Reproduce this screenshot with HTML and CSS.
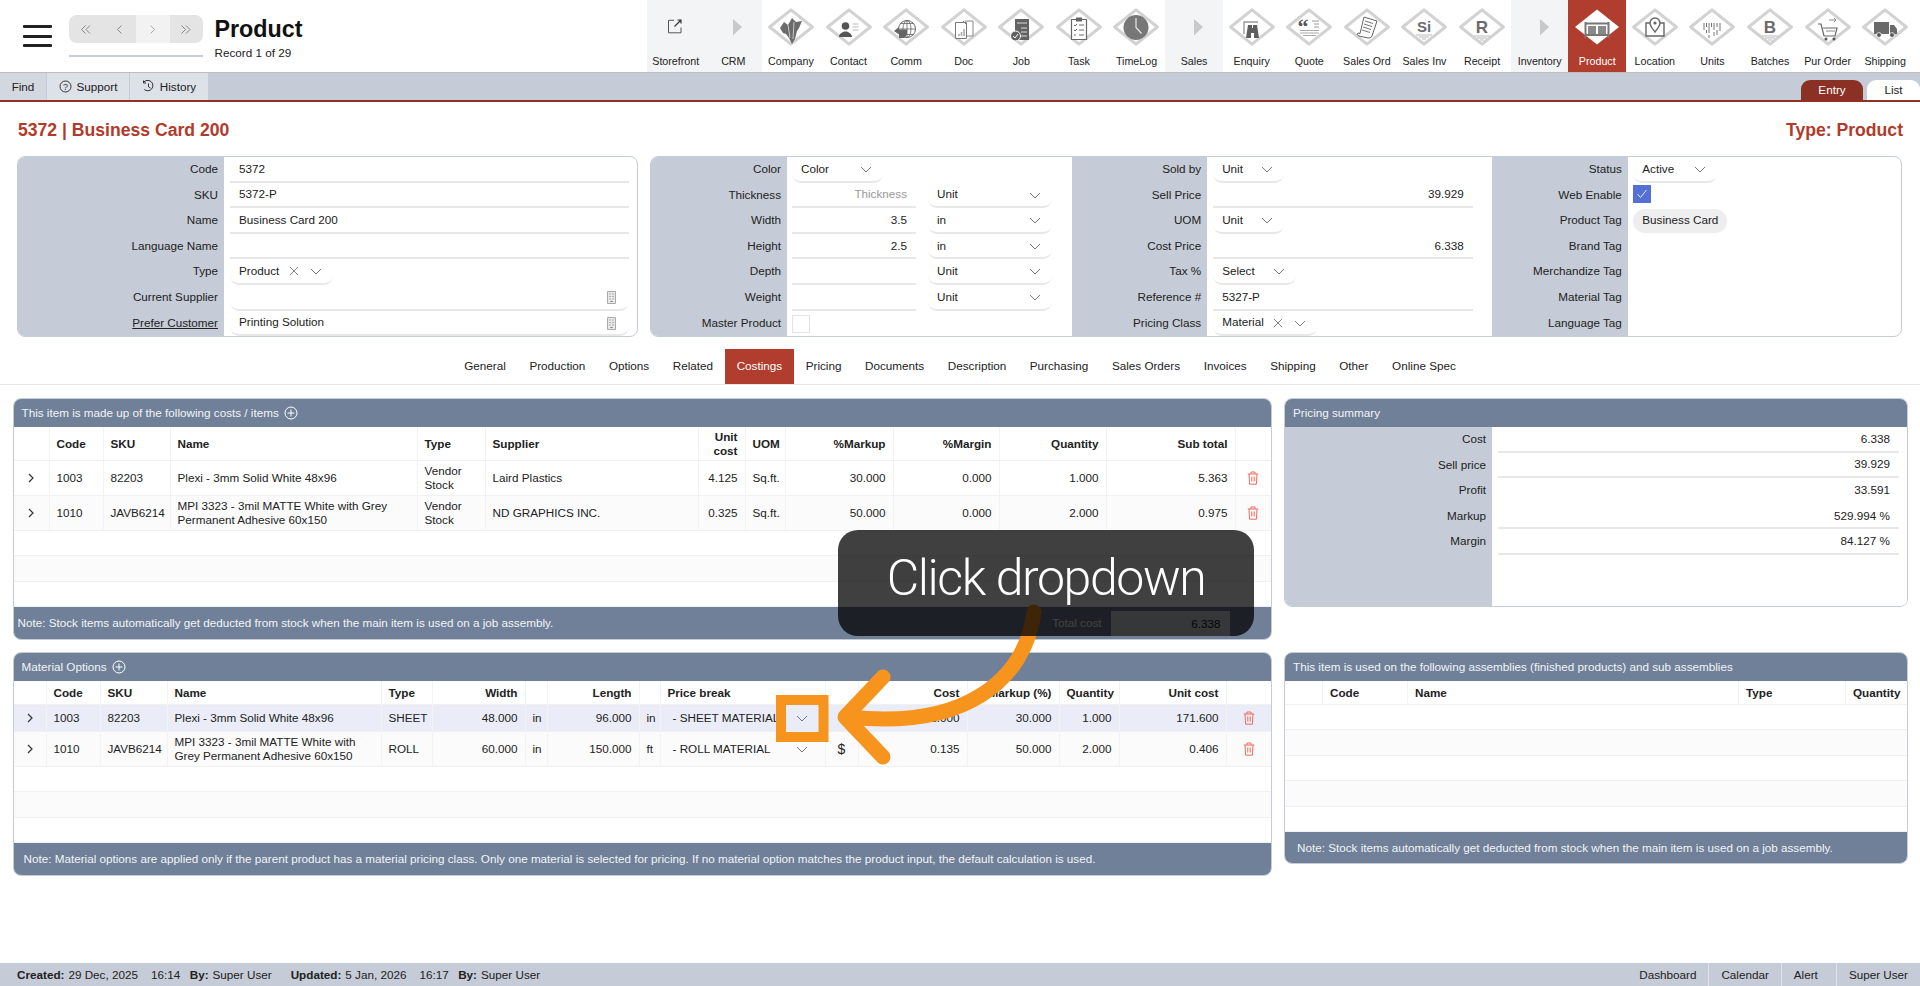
FILE: index.html
```html
<!DOCTYPE html>
<html lang="en">
<head>
<meta charset="utf-8">
<title>Product</title>
<link rel="stylesheet" href="styles.css">
</head>
<body>
<svg class="defs" width="0" height="0" aria-hidden="true">
  <symbol id="dia" viewBox="0 0 46 38"><polygon points="23,1.800 44.400,19 23,36.200 1.600,19" fill="#fff" stroke="#d2d2d2" stroke-width="3" stroke-linejoin="round"/></symbol>
  <symbol id="chev" viewBox="0 0 12 7"><path d="M1 1l5 5 5-5" fill="none" stroke="#777" stroke-width="1"/></symbol>
  <symbol id="clr" viewBox="0 0 11 11"><path d="M1 1l9 9M10 1l-9 9" fill="none" stroke="#777" stroke-width="1"/></symbol>
  <symbol id="trash" viewBox="0 0 12 14"><path d="M.8 3h10.400M4 3V1h4v2M2 3l.6 10.200h6.800L10 3M4.800 5.500v5M7.200 5.500v5" fill="none" stroke="#f26a5a" stroke-width="1"/></symbol>
  <symbol id="expand" viewBox="0 0 6 10"><path d="M1 1l4 4-4 4" fill="none" stroke="#333" stroke-width="1.200"/></symbol>
  <symbol id="plus" viewBox="0 0 14 14"><circle cx="7" cy="7" r="6" fill="none" stroke="#fff" stroke-width="1"/><path d="M7 3.600v6.800M3.600 7h6.800" stroke="#fff" stroke-width="1"/></symbol>
  <symbol id="bldg" viewBox="0 0 9 13"><path d="M.5.5h8v12h-8z" fill="#e8e8e8" stroke="#aaa"/><path d="M2.500 3h1M5.500 3h1M2.500 5.500h1M5.500 5.500h1M2.500 8h1M5.500 8h1M3.500 10.500h2" stroke="#777"/></symbol>
</svg>

<header class="top">
  <button class="burger" aria-label="Menu"><span></span><span></span><span></span></button>
  <div class="pager-wrap">
    <div class="pager">
      <span class="pg"><svg width="10" height="9" viewBox="0 0 10 9"><path d="M4.500.5l-4 4 4 4M9 .5l-4 4 4 4" fill="none" stroke="#888"/></svg></span>
      <span class="pg"><svg width="5" height="9" viewBox="0 0 5 9"><path d="M4.500.5l-4 4 4 4" fill="none" stroke="#888"/></svg></span>
      <span class="pg off"><svg width="5" height="9" viewBox="0 0 5 9"><path d="M.5.5l4 4-4 4" fill="none" stroke="#aaa"/></svg></span>
      <span class="pg"><svg width="10" height="9" viewBox="0 0 10 9"><path d="M.5.5l4 4-4 4M5 .5l4 4-4 4" fill="none" stroke="#888"/></svg></span>
    </div>
    <div class="pager-line"></div>
  </div>
  <div class="rec">
    <h1>Product</h1>
    <p>Record 1 of 29</p>
  </div>
  <nav class="mods">
    <a class="mod grp"><svg class="ic" viewBox="0 0 46 38"><path d="M28 19.500v5.300h-12.500v-12.500h5.500" fill="none" stroke="#555" stroke-width="1"/><path d="M21.500 18.500l6.500-6.500M24.500 12h3.500v3.500" fill="none" stroke="#333" stroke-width="1.200"/></svg><span>Storefront</span></a>
    <a class="mod grp"><svg class="ic" viewBox="0 0 46 38"><path d="M23 11l9 8-9 8.500z" fill="#c9c9c9"/></svg><span>CRM</span></a>
    <a class="mod"><svg class="ic" viewBox="0 0 46 38"><use href="#dia"/><g transform="translate(0 4)"><path d="M12 16l4-6 4 3 4-7 4 4 6-1-3 7-2 3-2 8-3 5-3-6-3-4-3-1z" fill="#6b6b6b"/><path d="M20 13l2 13M26 10l-1 17" stroke="#ddd" stroke-width=".8"/></g></svg><span>Company</span></a>
    <a class="mod"><svg class="ic" viewBox="0 0 46 38"><use href="#dia"/><g transform="translate(0 3)"><circle cx="19.500" cy="15" r="3.800" fill="#555"/><path d="M13 26c0-3.500 3.500-4.500 5-5.500h3c1.500 1 5 2 5 5.500z" fill="#555"/><path d="M26.500 13h6M26.500 16h6M26.500 19h6" stroke="#bbb"/></g></svg><span>Contact</span></a>
    <a class="mod"><svg class="ic" viewBox="0 0 46 38"><use href="#dia"/><g transform="translate(0 4)"><circle cx="24" cy="17" r="8.500" fill="#fff" stroke="#666"/><path d="M15.500 17h17M24 8.500v17M18 11.500h12M18 22.500h12" stroke="#666" stroke-width=".8"/><ellipse cx="24" cy="17" rx="4" ry="8.500" fill="none" stroke="#666" stroke-width=".8"/><path d="M11 19l5-4v2.500h8v5l-3 3.500h-5v-3.500z" fill="#666"/></g></svg><span>Comm</span></a>
    <a class="mod"><svg class="ic" viewBox="0 0 46 38"><use href="#dia"/><g transform="translate(0 2)"><path d="M24 11h8v15h-8" fill="#fff" stroke="#888"/><path d="M14.500 12.500h11v16h-11z" fill="#fff" stroke="#777"/><path d="M22 11l3 3" stroke="#777"/><path d="M18 26v-2M20.500 26v-4M23 26v-7" stroke="#aaa" stroke-width="1.600"/></g></svg><span>Doc</span></a>
    <a class="mod"><svg class="ic" viewBox="0 0 46 38"><use href="#dia"/><g transform="translate(0 3)"><path d="M17 8h14v21h-14z" fill="#626262"/><path d="M19 12h10M23 17h6M23 21h6M23 25h6" stroke="#ddd"/><circle cx="17.500" cy="25" r="5" fill="#626262" stroke="#fff"/><path d="M15 25l2 2 3-4" fill="none" stroke="#fff"/></g></svg><span>Job</span></a>
    <a class="mod"><svg class="ic" viewBox="0 0 46 38"><use href="#dia"/><g transform="translate(0 2)"><path d="M15.500 9.500h15v20h-15z" fill="#fff" stroke="#666" stroke-width="1.200"/><path d="M20 7.500h6v4h-6z" fill="#666"/><path d="M18 15l1 1 2-2M18 20l1 1 2-2M18 25h2M23 15h5M23 20h5M23 25h5" fill="none" stroke="#666"/></g></svg><span>Task</span></a>
    <a class="mod"><svg class="ic" viewBox="0 0 46 38"><use href="#dia"/><circle cx="23" cy="19.500" r="12.500" fill="#777"/><path d="M23 10v9.500l5.500 6" fill="none" stroke="#e8e8e8" stroke-width="1.200"/></svg><span>TimeLog</span></a>
    <a class="mod grp"><svg class="ic" viewBox="0 0 46 38"><path d="M23 11l9 8-9 8.500z" fill="#c9c9c9"/></svg><span>Sales</span></a>
    <a class="mod"><svg class="ic" viewBox="0 0 46 38"><use href="#dia"/><g transform="translate(0 2)"><path d="M29 12h-14v12" fill="none" stroke="#999" stroke-width="1.400"/><path d="M19 15h4v3h1v-3h4l2 13h-5v-5h-3v5h-5z" fill="#5e5e5e"/></g></svg><span>Enquiry</span></a>
    <a class="mod"><svg class="ic" viewBox="0 0 46 38"><use href="#dia"/><g transform="translate(0 1)"><text class="ic-t q" x="11.500" y="25">“</text><path d="M26 12h7M28 15h5M28 18h5" stroke="#999"/><path d="M14 21.500h19M14 24h19M17 26.500h13" stroke="#aaa"/></g></svg><span>Quote</span></a>
    <a class="mod"><svg class="ic" viewBox="0 0 46 38"><use href="#dia"/><g transform="translate(0 1)"><path d="M20 8l13 4-5 15c-1 2-3 2-4 2l-9-2c-2-1-2-2-1-3l2 .500z" fill="#fff" stroke="#666"/><path d="M21 12l8 2.500M20 15l8 2.500M19 18l8 2.500M18 21l8 2.500" stroke="#777"/></g></svg><span>Sales Ord</span></a>
    <a class="mod"><svg class="ic" viewBox="0 0 46 38"><use href="#dia"/><text class="ic-t" x="23" y="24">Si</text><path d="M15 27h16M18 29h10M21 31h4" stroke="#bbb"/></svg><span>Sales Inv</span></a>
    <a class="mod"><svg class="ic" viewBox="0 0 46 38"><use href="#dia"/><text class="ic-t big" x="23" y="25">R</text><path d="M15 28h16M18 30h10M21 32h4" stroke="#bbb"/></svg><span>Receipt</span></a>
    <a class="mod grp"><svg class="ic" viewBox="0 0 46 38"><path d="M23 11l9 8-9 8.500z" fill="#c9c9c9"/></svg><span>Inventory</span></a>
    <a class="mod on"><svg class="ic" viewBox="0 0 46 38"><polygon points="23,1.500 45,19 23,36.500 1,19" fill="#fff"/><g transform="translate(0 3)"><path d="M11.500 11v16M34.500 11v16M11.500 12.500h23M11.500 24h23" stroke="#777" stroke-width="2"/><path d="M14 15h8v8h-8zM24 15h8v8h-8z" fill="#8a8a8a"/></g></svg><span>Product</span></a>
    <a class="mod"><svg class="ic" viewBox="0 0 46 38"><use href="#dia"/><g transform="translate(0 1)"><path d="M18 14h-4v13h18v-13h-4" fill="none" stroke="#666" stroke-width="1.400"/><path d="M23 23c-3-4-5-6-5-9a5 5 0 0 1 10 0c0 3-2 5-5 9z" fill="#fff" stroke="#666" stroke-width="1.400"/><circle cx="23" cy="14" r="1.600" fill="#666"/></g></svg><span>Location</span></a>
    <a class="mod"><svg class="ic" viewBox="0 0 46 38"><use href="#dia"/><g transform="translate(0 3)"><path d="M15 12v7M17.500 12v4M20 12v10M22.500 12v4M25 12v7M28 12v4M31 12v8M20 24v3M25 21v4M17.500 19v3M28 19v5" stroke="#777" stroke-width="1"/></g></svg><span>Units</span></a>
    <a class="mod"><svg class="ic" viewBox="0 0 46 38"><use href="#dia"/><text class="ic-t big" x="23" y="25">B</text><path d="M15 28h16M18 30h10M21 32h4" stroke="#bbb"/></svg><span>Batches</span></a>
    <a class="mod"><svg class="ic" viewBox="0 0 46 38"><use href="#dia"/><g transform="translate(0 3)"><path d="M13 13h3l3 12h11l2-8h-14" fill="none" stroke="#666" stroke-width="1.200"/><path d="M21 20h9M24 9h7M29 7l2 2-2 2" fill="none" stroke="#888"/><circle cx="21" cy="28" r="1.500" fill="#555"/><circle cx="29" cy="28" r="1.500" fill="#555"/></g></svg><span>Pur Order</span></a>
    <a class="mod"><svg class="ic" viewBox="0 0 46 38"><use href="#dia"/><g transform="translate(0 2)"><path d="M12 12h15v12h-15z" fill="#6a6a6a"/><path d="M28 15h4l3 4v5h-7z" fill="#6a6a6a"/><circle cx="17" cy="25" r="2.400" fill="#555" stroke="#fff" stroke-width=".8"/><circle cx="30" cy="25" r="2.400" fill="#555" stroke="#fff" stroke-width=".8"/></g></svg><span>Shipping</span></a>
  </nav>
</header>

<div class="subnav">
  <a class="sub s-find">Find</a>
  <a class="sub s-sup"><svg width="13" height="13" viewBox="0 0 13 13"><circle cx="6.500" cy="6.500" r="5.500" fill="none" stroke="#333"/><text class="qm" x="6.500" y="9.500">?</text></svg>Support</a>
  <a class="sub s-his"><svg width="13" height="13" viewBox="0 0 13 13"><path d="M1.500 2.500a5.200 5.200 0 1 1 .8 7M1.500 .5v2.500h2.500M6.500 3.500v3.200l2 1.300" fill="none" stroke="#333"/></svg>History</a>
  <div class="sub-tabs">
    <a class="st on">Entry</a>
    <a class="st">List</a>
  </div>
</div>

<div class="titlebar">
  <h2>5372 | Business Card 200</h2>
  <h2>Type: Product</h2>
</div>

<section class="forms">
  <div class="card c1">
    <div class="grp-f g1">
      <div class="row"><label>Code</label><div class="val"><div class="inp">5372</div></div></div>
      <div class="row"><label>SKU</label><div class="val"><div class="inp">5372-P</div></div></div>
      <div class="row"><label>Name</label><div class="val"><div class="inp">Business Card 200</div></div></div>
      <div class="row"><label>Language Name</label><div class="val"><div class="inp"></div></div></div>
      <div class="row"><label>Type</label><div class="val"><div class="inp sel w103">Product<svg class="x"><use href="#clr"/></svg><svg class="cv"><use href="#chev"/></svg></div></div></div>
      <div class="row"><label>Current Supplier</label><div class="val"><div class="inp look"><svg class="bl"><use href="#bldg"/></svg></div></div></div>
      <div class="row"><label><u>Prefer Customer</u></label><div class="val"><div class="inp look">Printing Solution<svg class="bl"><use href="#bldg"/></svg></div></div></div>
    </div>
  </div>
  <div class="card c2">
    <div class="grp-f g2">
      <div class="row"><label>Color</label><div class="val"><div class="inp sel w91">Color<svg class="cv"><use href="#chev"/></svg></div></div></div>
      <div class="row"><label>Thickness</label><div class="val"><div class="inp num ph">Thickness</div><div class="inp sel unit">Unit<svg class="cv"><use href="#chev"/></svg></div></div></div>
      <div class="row"><label>Width</label><div class="val"><div class="inp num">3.5</div><div class="inp sel unit">in<svg class="cv"><use href="#chev"/></svg></div></div></div>
      <div class="row"><label>Height</label><div class="val"><div class="inp num">2.5</div><div class="inp sel unit">in<svg class="cv"><use href="#chev"/></svg></div></div></div>
      <div class="row"><label>Depth</label><div class="val"><div class="inp num"></div><div class="inp sel unit">Unit<svg class="cv"><use href="#chev"/></svg></div></div></div>
      <div class="row"><label>Weight</label><div class="val"><div class="inp num"></div><div class="inp sel unit">Unit<svg class="cv"><use href="#chev"/></svg></div></div></div>
      <div class="row"><label>Master Product</label><div class="val"><div class="chk"></div></div></div>
    </div>
    <div class="grp-f g3">
      <div class="row"><label>Sold by</label><div class="val"><div class="inp sel w71">Unit<svg class="cv"><use href="#chev"/></svg></div></div></div>
      <div class="row"><label>Sell Price</label><div class="val"><div class="inp num full">39.929</div></div></div>
      <div class="row"><label>UOM</label><div class="val"><div class="inp sel w71">Unit<svg class="cv"><use href="#chev"/></svg></div></div></div>
      <div class="row"><label>Cost Price</label><div class="val"><div class="inp num full">6.338</div></div></div>
      <div class="row"><label>Tax %</label><div class="val"><div class="inp sel w83">Select<svg class="cv"><use href="#chev"/></svg></div></div></div>
      <div class="row"><label>Reference #</label><div class="val"><div class="inp full">5327-P</div></div></div>
      <div class="row"><label>Pricing Class</label><div class="val"><div class="inp sel w104">Material<svg class="x"><use href="#clr"/></svg><svg class="cv"><use href="#chev"/></svg></div></div></div>
    </div>
    <div class="grp-f g4">
      <div class="row"><label>Status</label><div class="val"><div class="inp sel w84">Active<svg class="cv"><use href="#chev"/></svg></div></div></div>
      <div class="row"><label>Web Enable</label><div class="val"><div class="chk on"><svg width="12" height="10" viewBox="0 0 12 10"><path d="M1.500 5l3 3.500 6-7.500" fill="none" stroke="#dfe6fb" stroke-width="1"/></svg></div></div></div>
      <div class="row"><label>Product Tag</label><div class="val"><span class="tag">Business Card</span></div></div>
      <div class="row"><label>Brand Tag</label><div class="val"></div></div>
      <div class="row"><label>Merchandize Tag</label><div class="val"></div></div>
      <div class="row"><label>Material Tag</label><div class="val"></div></div>
      <div class="row"><label>Language Tag</label><div class="val"></div></div>
    </div>
  </div>
</section>

<nav class="tabs">
  <a>General</a><a>Production</a><a>Options</a><a>Related</a><a class="on">Costings</a><a>Pricing</a><a>Documents</a><a>Description</a><a>Purchasing</a><a>Sales Orders</a><a>Invoices</a><a>Shipping</a><a>Other</a><a>Online Spec</a>
</nav>

<main class="content">
  <div class="col-l">
    <section class="panel p-cost">
      <div class="ph-bar">This item is made up of the following costs / items<svg class="pl"><use href="#plus"/></svg></div>
      <table class="tb tb1">
        <colgroup><col><col><col><col><col><col><col><col><col><col><col><col><col></colgroup>
        <tr class="hd h34"><th></th><th>Code</th><th>SKU</th><th>Name</th><th>Type</th><th>Supplier</th><th class="r">Unit cost</th><th>UOM</th><th class="r">%Markup</th><th class="r">%Margin</th><th class="r">Quantity</th><th class="r">Sub total</th><th></th></tr>
        <tr class="h35"><td class="c"><svg class="ex"><use href="#expand"/></svg></td><td>1003</td><td>82203</td><td>Plexi - 3mm Solid White 48x96</td><td>Vendor Stock</td><td>Laird Plastics</td><td class="r">4.125</td><td>Sq.ft.</td><td class="r">30.000</td><td class="r">0.000</td><td class="r">1.000</td><td class="r">5.363</td><td class="c"><svg class="tr"><use href="#trash"/></svg></td></tr>
        <tr class="h35 alt"><td class="c"><svg class="ex"><use href="#expand"/></svg></td><td>1010</td><td>JAVB6214</td><td>MPI 3323 - 3mil MATTE White with Grey Permanent Adhesive 60x150</td><td>Vendor Stock</td><td>ND GRAPHICS INC.</td><td class="r">0.325</td><td>Sq.ft.</td><td class="r">50.000</td><td class="r">0.000</td><td class="r">2.000</td><td class="r">0.975</td><td class="c"><svg class="tr"><use href="#trash"/></svg></td></tr>
        <tr class="h25"><td colspan="13"></td></tr>
        <tr class="h26 alt"><td colspan="13"></td></tr>
        <tr class="h25"><td colspan="13"></td></tr>
      </table>
      <div class="pf-bar pf1">
        <span>Note: Stock items automatically get deducted from stock when the main item is used on a job assembly.</span>
        <span class="total">Total cost<b>6.338</b></span>
      </div>
    </section>
    <section class="panel p-mat">
      <div class="ph-bar">Material Options<svg class="pl"><use href="#plus"/></svg></div>
      <table class="tb tb2">
        <colgroup><col><col><col><col><col><col><col><col><col><col><col><col><col><col><col><col></colgroup>
        <tr class="hd h24"><th></th><th>Code</th><th>SKU</th><th>Name</th><th>Type</th><th class="r">Width</th><th></th><th class="r">Length</th><th></th><th>Price break</th><th></th><th class="r">Cost</th><th class="r">Markup (%)</th><th class="r">Quantity</th><th class="r">Unit cost</th><th></th></tr>
        <tr class="h27 sel-row"><td class="c"><svg class="ex"><use href="#expand"/></svg></td><td>1003</td><td>82203</td><td>Plexi - 3mm Solid White 48x96</td><td>SHEET</td><td class="r">48.000</td><td>in</td><td class="r">96.000</td><td>in</td><td class="pb">- SHEET MATERIAL<svg class="cv"><use href="#chev"/></svg></td><td></td><td class="r">132.000</td><td class="r">30.000</td><td class="r">1.000</td><td class="r">171.600</td><td class="c"><svg class="tr"><use href="#trash"/></svg></td></tr>
        <tr class="h35 alt"><td class="c"><svg class="ex"><use href="#expand"/></svg></td><td>1010</td><td>JAVB6214</td><td>MPI 3323 - 3mil MATTE White with Grey Permanent Adhesive 60x150</td><td>ROLL</td><td class="r">60.000</td><td>in</td><td class="r">150.000</td><td>ft</td><td class="pb">- ROLL MATERIAL<svg class="cv"><use href="#chev"/></svg></td><td class="cur">$</td><td class="r">0.135</td><td class="r">50.000</td><td class="r">2.000</td><td class="r">0.406</td><td class="c"><svg class="tr"><use href="#trash"/></svg></td></tr>
        <tr class="h25"><td colspan="16"></td></tr>
        <tr class="h26 alt"><td colspan="16"></td></tr>
        <tr class="h25"><td colspan="16"></td></tr>
      </table>
      <div class="pf-bar pf2"><span>Note: Material options are applied only if the parent product has a material pricing class. Only one material is selected for pricing. If no material option matches the product input, the default calculation is used.</span></div>
    </section>
  </div>
  <div class="col-r">
    <section class="panel p-sum">
      <div class="ph-bar">Pricing summary</div>
      <div class="sum">
        <div class="row"><label>Cost</label><div class="val"><div class="inp num full">6.338</div></div></div>
        <div class="row"><label>Sell price</label><div class="val"><div class="inp num full">39.929</div></div></div>
        <div class="row"><label>Profit</label><div class="val"><div class="inp num full nob">33.591</div></div></div>
        <div class="row"><label>Markup</label><div class="val"><div class="inp num full">529.994 %</div></div></div>
        <div class="row"><label>Margin</label><div class="val"><div class="inp num full">84.127 %</div></div></div>
      </div>
    </section>
    <section class="panel p-asm">
      <div class="ph-bar">This item is used on the following assemblies (finished products) and sub assemblies</div>
      <table class="tb tb3">
        <colgroup><col><col><col><col><col></colgroup>
        <tr class="hd h24"><th></th><th>Code</th><th>Name</th><th>Type</th><th>Quantity</th></tr>
        <tr class="h25"><td colspan="5"></td></tr>
        <tr class="h26 alt"><td colspan="5"></td></tr>
        <tr class="h25"><td colspan="5"></td></tr>
        <tr class="h26 alt"><td colspan="5"></td></tr>
        <tr class="h25"><td colspan="5"></td></tr>
      </table>
      <div class="pf-bar pf3"><span>Note: Stock items automatically get deducted from stock when the main item is used on a job assembly.</span></div>
    </section>
  </div>
</main>

<footer class="status">
  <div class="meta"><b>Created:</b><span>29 Dec, 2025</span><span class="m1">16:14</span><b class="m2">By:</b><span>Super User</span><b class="m3">Updated:</b><span>5 Jan, 2026</span><span class="m1">16:17</span><b class="m2">By:</b><span>Super User</span></div>
  <div class="links"><a>Dashboard</a><a>Calendar</a><a class="l-alert">Alert</a><a>Super User</a></div>
</footer>

<svg class="annot" viewBox="0 0 1920 986" aria-hidden="true">
  <rect x="781" y="700" width="42.500" height="37" fill="none" stroke="#f7941d" stroke-width="10"/>
  <path d="M1034 612C1025 680 965 730 848 717" fill="none" stroke="#f7941d" stroke-width="15" stroke-linecap="round"/>
  <path d="M883 677L845 717L883 757" fill="none" stroke="#f7941d" stroke-width="15" stroke-linecap="round" stroke-linejoin="round"/>
</svg>
<div class="callout">Click dropdown</div>
</body>
</html>
```

FILE: styles.css
```css
* { box-sizing: border-box; }
html, body { margin: 0; padding: 0; }
body {
  width: 1920px;
  height: 986px;
  overflow: hidden;
  position: relative;
  display: flex;
  flex-direction: column;
  background: #fff;
  color: #222;
  font: 11.7px/14px "Liberation Sans", Arial, sans-serif;
}
.defs { position: absolute; }
h1, h2, p { margin: 0; }
a { color: inherit; }

/* top bar */
.top {
  height: 73px;
  display: flex;
  border-bottom: 1px solid #bdbdbd;
  flex: none;
}
.burger {
  width: 29px;
  height: 22px;
  margin: 25px 17px 0 23px;
  padding: 0;
  border: 0;
  background: none;
  display: flex;
  flex-direction: column;
  justify-content: space-between;
}
.burger span { display: block; height: 3px; background: #222; border-radius: 1px; }
.pager-wrap { width: 134px; padding-top: 15px; }
.pager { display: flex; height: 28px; border-radius: 8px; overflow: hidden; }
.pg { flex: 1; display: flex; align-items: center; justify-content: center; background: #e4e4e4; }
.pg.off { background: #f2f2f2; }
.pager-line { height: 2px; margin-top: 12px; background: #c5ccd7; }
.rec { margin-left: 11.500px; padding-top: 16px; }
.rec h1 { font-size: 23.300px; line-height: 26px; font-weight: 700; color: #111; }
.rec p { margin-top: 4px; line-height: 14px; color: #222; }
.mods { margin-left: auto; margin-right: 6px; display: flex; }
.mod {
  width: 57.600px;
  height: 72px;
  display: flex;
  flex-direction: column;
  align-items: center;
  padding-top: 8px;
  font-size: 10.700px;
  white-space: nowrap;
}
.mod .ic { width: 46px; height: 38px; display: block; overflow: visible; flex: none; }
.mod span { margin-top: 9px; line-height: 13px; }
.mod.grp { background: #f3f4f5; }
.mod.on { background: #b03d2e; color: #fff; }
.ic-t { font: 700 15px "Liberation Sans", sans-serif; fill: #6b6b6b; text-anchor: middle; }
.ic-t.big { font-size: 17px; }
.ic-t.q { font: 700 22px "Liberation Serif", serif; text-anchor: start; fill: #555; }

/* sub nav */
.subnav {
  height: 29px;
  flex: none;
  display: flex;
  background: #c5ccd7;
  border-bottom: 2px solid #8f3125;
}
.sub { display: flex; align-items: center; justify-content: center; gap: 5px; margin-right: 1px; }
.s-find { width: 46px; background: #d3d8e0; }
.s-sup { width: 82px; background: #dde1e8; }
.s-his { width: 78px; background: #dde1e8; }
.qm { font-size: 9px; text-anchor: middle; fill: #333; }
.sub-tabs { margin-left: auto; display: flex; align-items: flex-end; gap: 4px; }
.st { width: 53px; height: 20px; background: #fff; border-radius: 9px 9px 0 0; display: flex; align-items: center; justify-content: center; }
.st.on { width: 62px; background: #8a3024; color: #fff; }

/* title */
.titlebar {
  height: 54px;
  flex: none;
  padding: 2px 17px 0 18px;
  display: flex;
  justify-content: space-between;
  align-items: center;
}
.titlebar h2 { font-size: 17.600px; line-height: 22px; font-weight: 700; color: #b23a2a; }

/* forms */
.forms { display: flex; gap: 12px; padding-left: 17px; height: 181px; flex: none; }
.card { border: 1px solid #c5ccd7; border-radius: 8px; overflow: hidden; display: flex; }
.c1 { width: 621px; }
.c2 { width: 1252px; }
.grp-f { display: flex; flex-direction: column; }
.row { display: flex; height: 25.600px; flex: none; }
.row label {
  flex: none;
  background: #c5ccd7;
  text-align: right;
  padding-right: 6px;
  line-height: 23.600px;
  white-space: nowrap;
}
.val { flex: 1; display: flex; align-items: stretch; min-width: 0; }
.inp {
  flex: 1;
  display: flex;
  align-items: center;
  height: 25.600px;
  padding: 0 9px;
  border-bottom: 2px solid #e8e8e8;
  position: relative;
  white-space: nowrap;
}
.sel, .look { border-radius: 0 0 9px 9px; }
.num { justify-content: flex-end; }
.ph { color: #999; }
.full { flex: 1; }
.nob { border-bottom: 0; padding-bottom: 2px; }
.cv { width: 12px; height: 7px; position: absolute; right: 11px; top: 9px; }
.x { width: 10px; height: 10px; position: absolute; right: 34px; top: 7px; }
.sel { flex: none; }
.bl { width: 9px; height: 13px; position: absolute; right: 13px; top: 6px; }
.g1 { width: 619px; }
.g1 label { width: 206px; }
.g1 .val { padding: 0 8px 0 6px; }
.g2 { width: 421px; }
.g2 label { width: 136px; }
.g2 .val { padding: 0 19px 0 5px; gap: 12px; }
.g2 .num { flex: none; width: 124px; }
.unit { width: 124px; }
.g3 { width: 420.500px; }
.g3 label { width: 135.500px; }
.g3 .val { padding: 0 19px 0 6px; }
.g4 { width: 409.500px; }
.g4 label { width: 136px; }
.g4 .val { padding-left: 5.500px; align-items: flex-start; }
.w91 { width: 91px; }
.w103 { width: 103px; }
.w104 { width: 104px; }
.w71 { width: 71px; }
.w83 { width: 83px; }
.w84 { width: 84px; }
.chk { width: 17.500px; height: 18px; margin-top: 4px; border: 1px solid #e3e3e3; }
.chk.on { background: #5470d6; border-color: #5470d6; display: flex; align-items: center; justify-content: center; }
.g4 .chk { margin-top: 2px; }
.tag { background: #eee; border-radius: 12px; height: 23.600px; line-height: 22px; padding: 0 9px; margin-top: 1px; white-space: nowrap; }

/* tabs */
.tabs {
  margin-top: 12px;
  height: 36px;
  flex: none;
  display: flex;
  justify-content: center;
  border-bottom: 1px solid #e6e6e6;
}
.tabs a { height: 35px; line-height: 34px; padding: 0 11.800px; }
.tabs a.on { background: #b03d2e; color: #fff; }

/* panels */
.content { display: flex; gap: 12.500px; padding: 13px 12px 0 12.500px; flex: none; }
.col-l { width: 1259px; display: flex; flex-direction: column; gap: 12px; }
.col-r { width: 624px; display: flex; flex-direction: column; gap: 45px; }
.panel { border: 1px solid #c5ccd7; border-radius: 8px; overflow: hidden; background: #fff; }
.ph-bar {
  height: 28px;
  background: #6f8098;
  color: #f2f4f7;
  display: flex;
  align-items: center;
  padding-left: 8px;
}
.pl { width: 14px; height: 14px; margin-left: 5px; }
.pf-bar {
  height: 32px;
  background: #6f8098;
  color: #f2f4f7;
  display: flex;
  align-items: center;
  justify-content: space-between;
}
.pf1 { padding-left: 4px; }
.pf2 { padding-left: 10px; }
.pf3 { padding-left: 12px; height: 31px; }
.total { display: flex; align-items: center; color: #fff; margin-right: 41px; }
.total b { width: 119px; height: 25px; margin-left: 9px; background: #d7dbe2; color: #111; font-weight: 400; text-align: right; padding-right: 9px; line-height: 25px; }

.tb { width: 100%; border-collapse: separate; border-spacing: 0; table-layout: fixed; }
.tb th, .tb td {
  padding: 0 7px;
  border-bottom: 1px solid #f1f1f1;
  border-right: 1px solid #f3f3f3;
  font-weight: 400;
  text-align: left;
  overflow: visible;
}
.tb th { font-weight: 700; color: #222; }
.tb td[colspan] { border-right: 0; }
.tb th:last-child, .tb td:last-child { border-right: 0; }
.tb .r { text-align: right; }
.tb .c { text-align: center; padding: 0; }
.h34 th { height: 34px; }
.h24 th { height: 24px; }
.h35 td { height: 35px; }
.h27 td { height: 27px; }
.h25 td { height: 25px; }
.h26 td { height: 26px; }
.alt td { background: #fbfbfb; }
.sel-row td { background: #eaedf8; }
.ex { width: 6px; height: 10px; vertical-align: -1px; }
.tr { width: 12px; height: 14px; vertical-align: -2px; }
.tb .pb { position: relative; padding-left: 12px; white-space: nowrap; }
.pb .cv { top: auto; margin-top: 4px; right: 17px; }
.tb .cur { font-size: 14px; padding-left: 12px; }

.tb1 col:nth-child(1) { width: 36px; }
.tb1 col:nth-child(2) { width: 54px; }
.tb1 col:nth-child(3) { width: 67px; }
.tb1 col:nth-child(4) { width: 247px; }
.tb1 col:nth-child(5) { width: 68px; }
.tb1 col:nth-child(6) { width: 213px; }
.tb1 col:nth-child(7) { width: 47px; }
.tb1 col:nth-child(8) { width: 40px; }
.tb1 col:nth-child(9) { width: 108px; }
.tb1 col:nth-child(10) { width: 106px; }
.tb1 col:nth-child(11) { width: 107px; }
.tb1 col:nth-child(12) { width: 129px; }

.tb2 col:nth-child(1) { width: 33px; }
.tb2 col:nth-child(2) { width: 54px; }
.tb2 col:nth-child(3) { width: 67px; }
.tb2 col:nth-child(4) { width: 214px; }
.tb2 col:nth-child(5) { width: 51px; }
.tb2 col:nth-child(6) { width: 93px; }
.tb2 col:nth-child(7) { width: 22px; }
.tb2 col:nth-child(8) { width: 92px; }
.tb2 col:nth-child(9) { width: 21px; }
.tb2 col:nth-child(10) { width: 165px; }
.tb2 col:nth-child(11) { width: 33px; }
.tb2 col:nth-child(12) { width: 109px; }
.tb2 col:nth-child(13) { width: 92px; }
.tb2 col:nth-child(14) { width: 60px; }
.tb2 col:nth-child(15) { width: 107px; }

.tb3 col:nth-child(1) { width: 38px; }
.tb3 col:nth-child(2) { width: 85px; }
.tb3 col:nth-child(3) { width: 331px; }
.tb3 col:nth-child(4) { width: 107px; }

.sum { height: 179px; background: linear-gradient(to right, #c5ccd7 207px, #fff 207px); }
.sum label { width: 207px; }
.sum .val { padding: 0 8px 0 6px; }

/* footer */
.status {
  margin-top: auto;
  height: 23px;
  flex: none;
  background: #c5ccd7;
  display: flex;
  justify-content: space-between;
  align-items: stretch;
  line-height: 23px;
}
.meta { padding-left: 17px; display: flex; gap: 4px; }
.m1 { margin-left: 9px; }
.m2 { margin-left: 5.500px; }
.m3 { margin-left: 15px; }
.links { display: flex; }
.links a { padding: 0 12px; border-left: 1px solid #dfe3e9; }
.links a:first-child { border-left: 0; }
.links .l-alert { padding-right: 18px; }

/* annotation */
.annot { position: absolute; left: 0; top: 0; width: 1920px; height: 986px; pointer-events: none; }
.callout {
  position: absolute;
  left: 838px;
  top: 530px;
  width: 416px;
  height: 106px;
  border-radius: 20px;
  background: rgba(0, 0, 0, .75);
  color: #fff;
  font: 300 50px/96px "Roboto", "Liberation Sans", sans-serif;
  letter-spacing: -1.400px;
  text-align: center;
}
```
